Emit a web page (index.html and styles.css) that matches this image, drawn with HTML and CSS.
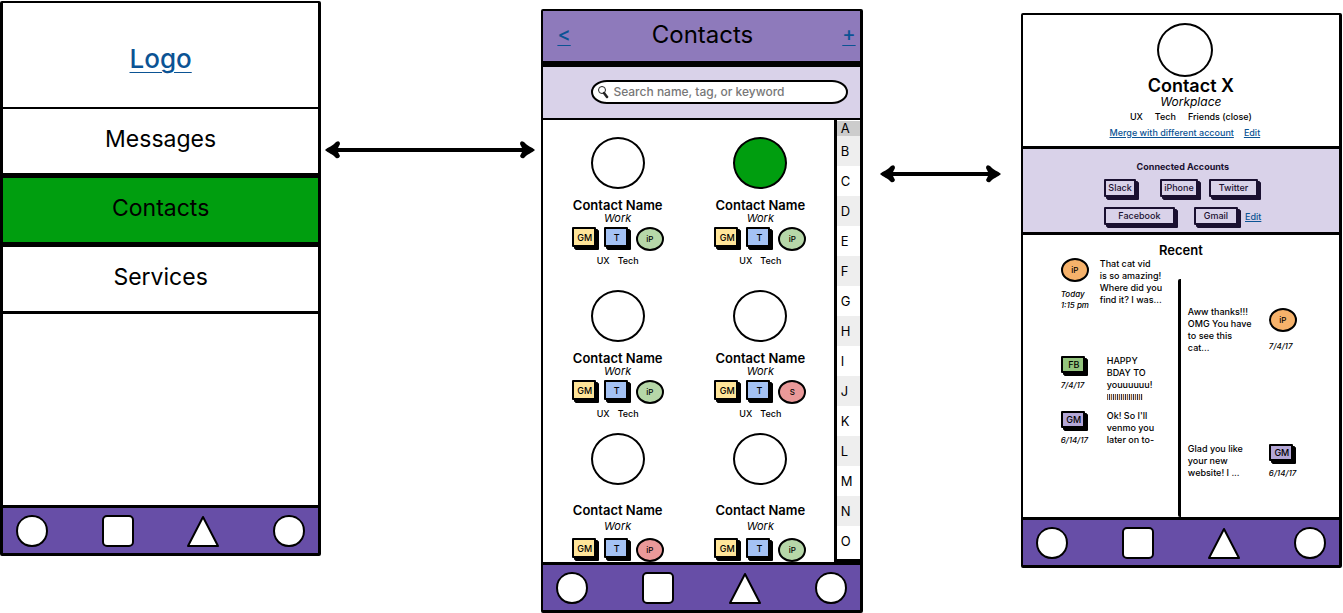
FILE: index.html
```
<!DOCTYPE html>
<html lang="en">
<head>
<meta charset="utf-8">
<title>Contacts wireflow</title>
<link rel="stylesheet" href="styles.css">
</head>
<body>
<svg class="defs" aria-hidden="true">
  <symbol id="head" viewBox="0 0 16 18"><path d="M0 9 C3 6 8 5 11 1 Q15 -1 15 3 L13 7 H16 V11 H13 L15 15 Q14 18 11 17 C8 13 3 12 0 9Z"/></symbol>
  <symbol id="circle" viewBox="0 0 32 32"><path d="M9 2.500 Q16 -.5 23 2.500 Q31 7 31 16 Q31 25 23 29.500 Q16 32.500 9 29.500 Q1 25 1 16 Q1 7 9 2.500Z" fill="#fff" stroke="#000" stroke-width="2"/></symbol>
  <symbol id="square" viewBox="0 0 32 32"><rect x="1" y="1" width="30" height="30" rx="4" fill="#fff" stroke="#000" stroke-width="2"/></symbol>
  <symbol id="triangle" viewBox="0 0 32 32"><path d="M16 2 L31 31 H1Z" fill="#fff" stroke="#000" stroke-width="2" stroke-linejoin="round"/></symbol>
</svg>
<main class="board">
  <section class="phone phone-menu">
    <div class="logo"><a href="#">Logo</a></div>
    <nav class="menu">
      <a href="#">Messages</a>
      <a href="#" class="active">Contacts</a>
      <a href="#">Services</a>
    </nav>
    <div class="blank"></div>
    <div class="tabs">
      <button aria-label="Circle"><svg><use href="#circle"/></svg></button>
      <button aria-label="Square"><svg><use href="#square"/></svg></button>
      <button aria-label="Triangle"><svg><use href="#triangle"/></svg></button>
      <button aria-label="Circle"><svg><use href="#circle"/></svg></button>
    </div>
  </section>

  <div class="arrow arrow-one"><svg><use href="#head"/></svg><span></span><svg class="flip"><use href="#head"/></svg></div>

  <section class="phone phone-list">
    <header class="bar">
      <a href="#">&lt;</a>
      <h1>Contacts</h1>
      <a href="#">+</a>
    </header>
    <div class="search">
      <label>
        <svg viewBox="0 0 12 14" aria-hidden="true"><circle cx="5" cy="5" r="3.500" fill="#fff" stroke="#222"/><path d="M7 8 L10 12" stroke="#222" stroke-width="2.500" stroke-linecap="round"/></svg>
        <input type="text" aria-label="Search" placeholder="Search name, tag, or keyword">
      </label>
    </div>
    <div class="list">
      <div class="people">
        <article class="person">
          <div class="avatar"></div><h2>Contact Name</h2><p class="work">Work</p>
          <div class="badges"><button class="box yellow">GM</button><button class="box blue">T</button><button class="oval green">iP</button></div>
          <p class="tags"><span>UX</span><span>Tech</span></p>
        </article>
        <article class="person">
          <div class="avatar online"></div><h2>Contact Name</h2><p class="work">Work</p>
          <div class="badges"><button class="box yellow">GM</button><button class="box blue">T</button><button class="oval green">iP</button></div>
          <p class="tags"><span>UX</span><span>Tech</span></p>
        </article>
        <article class="person">
          <div class="avatar"></div><h2>Contact Name</h2><p class="work">Work</p>
          <div class="badges"><button class="box yellow">GM</button><button class="box blue">T</button><button class="oval green">iP</button></div>
          <p class="tags"><span>UX</span><span>Tech</span></p>
        </article>
        <article class="person">
          <div class="avatar"></div><h2>Contact Name</h2><p class="work">Work</p>
          <div class="badges"><button class="box yellow">GM</button><button class="box blue">T</button><button class="oval red">S</button></div>
          <p class="tags"><span>UX</span><span>Tech</span></p>
        </article>
        <article class="person loose">
          <div class="avatar"></div><h2>Contact Name</h2><p class="work">Work</p>
          <div class="badges"><button class="box yellow">GM</button><button class="box blue">T</button><button class="oval red">iP</button></div>
        </article>
        <article class="person loose">
          <div class="avatar"></div><h2>Contact Name</h2><p class="work">Work</p>
          <div class="badges"><button class="box yellow">GM</button><button class="box blue">T</button><button class="oval green">iP</button></div>
        </article>
      </div>
      <ul class="index">
        <li>A</li><li>B</li><li>C</li><li>D</li><li>E</li><li>F</li><li>G</li><li>H</li><li>I</li><li>J</li><li>K</li><li>L</li><li>M</li><li>N</li><li>O</li>
      </ul>
    </div>
    <div class="tabs">
      <button aria-label="Circle"><svg><use href="#circle"/></svg></button>
      <button aria-label="Square"><svg><use href="#square"/></svg></button>
      <button aria-label="Triangle"><svg><use href="#triangle"/></svg></button>
      <button aria-label="Circle"><svg><use href="#circle"/></svg></button>
    </div>
  </section>

  <div class="arrow arrow-two"><svg><use href="#head"/></svg><span></span><svg class="flip"><use href="#head"/></svg></div>

  <section class="phone phone-detail">
    <header class="profile">
      <div class="avatar"></div>
      <div class="who">
        <h1>Contact X</h1>
        <p class="work">Workplace</p>
        <p class="tags"><span>UX</span><span>Tech</span><span>Friends (close)</span></p>
      </div>
      <p class="links"><a href="#">Merge with different account</a><a href="#">Edit</a></p>
    </header>
    <div class="accounts">
      <h2>Connected Accounts</h2>
      <div class="row"><button class="first">Slack</button><button>iPhone</button><button class="wide">Twitter</button></div>
      <div class="row second"><button class="first wider">Facebook</button><button class="wide">Gmail</button><a href="#">Edit</a></div>
    </div>
    <div class="recent">
      <h2>Recent</h2>
      <div class="threads">
        <div class="left">
          <article class="msg lead">
            <div class="meta"><button class="oval orange">iP</button><time>Today<br>1:15 pm</time></div>
            <p>That cat vid<br>is so amazing!<br>Where did you<br>find it? I was...</p>
          </article>
          <article class="msg">
            <div class="meta"><button class="box lime">FB</button><time>7/4/17</time></div>
            <p>HAPPY<br>BDAY TO<br>youuuuuu!<br><span class="emoji"></span></p>
          </article>
          <article class="msg">
            <div class="meta"><button class="box violet">GM</button><time>6/14/17</time></div>
            <p>Ok! So I'll<br>venmo you<br>later on to-</p>
          </article>
        </div>
        <div class="right">
          <article class="msg">
            <p>Aww thanks!!!<br>OMG You have<br>to see this<br>cat...</p>
            <div class="meta"><button class="oval orange">iP</button><time>7/4/17</time></div>
          </article>
          <article class="msg">
            <p>Glad you like<br>your new<br>website! I ...</p>
            <div class="meta"><button class="box violet">GM</button><time>6/14/17</time></div>
          </article>
        </div>
      </div>
    </div>
    <div class="tabs">
      <button aria-label="Circle"><svg><use href="#circle"/></svg></button>
      <button aria-label="Square"><svg><use href="#square"/></svg></button>
      <button aria-label="Triangle"><svg><use href="#triangle"/></svg></button>
      <button aria-label="Circle"><svg><use href="#circle"/></svg></button>
    </div>
  </section>
</main>
</body>
</html>
```
FILE: styles.css
```
* { box-sizing: border-box; }
body { margin: 0; background: #fff; color: #000; font-family: Inter, "Open Sans", sans-serif; font-size: 9px; font-weight: 500; }
h1, h2, p, ul { margin: 0; padding: 0; }
h1, h2 { white-space: nowrap; }
button { font-family: inherit; font-weight: inherit; color: inherit; padding: 0; cursor: pointer; }
a { color: #0b5394; }
.defs { display: none; }

.board {
  display: grid;
  grid-template-columns: 321fr 220fr 321fr 158fr 321fr;
  align-items: start;
  padding: 1px 1px 0 0;
}
.phone { min-width: 0; border: 2px solid #000; border-right-width: 3px; border-bottom-width: 3px; border-radius: 2px; background: #fff; }
.phone-menu { border-left-width: 3px; }
.phone-list { margin-top: 8px; }
.phone-detail { margin-top: 12px; }

/* first phone */
.logo { display: flex; justify-content: center; align-items: center; height: 104px; padding-top: 6px; font-size: 26px; }
.logo a, .bar a { text-decoration-thickness: 1px; text-underline-offset: 4px; }
.menu a {
  display: flex; justify-content: center; align-items: center; height: 69px;
  border-top: 2px solid #000; border-bottom: 3px solid #000;
  font-size: 23px; font-weight: 400; color: #000; text-decoration: none; padding-bottom: 4px;
}
.menu .active { background: #009e0f; }
.blank { height: 191px; }

/* bottom tab bar */
.tabs { display: flex; justify-content: space-between; padding: 7px 13px; background: #674ea7; border-top: 3px solid #000; }
.tabs button { border: 0; background: none; width: 32px; height: 31px; }
.tabs svg { display: block; width: 32px; height: 32px; }

/* arrows between phones */
.arrow { display: flex; align-items: center; }
.arrow svg { width: 16px; height: 18px; flex: none; }
.arrow span { flex: 1; height: 4px; background: #000; }
.arrow .flip { transform: scaleX(-1); }
.arrow-one { margin-top: 140px; padding: 0 6px 0 4px; }
.arrow-two { margin-top: 164px; padding: 0 20px 0 17px; }

/* contacts list */
.bar { display: flex; justify-content: space-between; align-items: center; height: 53px; padding: 0 4px 4px 14px; background: #8e7abb; border-bottom: 3px solid #000; font-size: 20px; }
.bar h1 { flex: 1; padding-right: 8px; text-align: center; font-size: 24px; font-weight: 400; }
.search { height: 56px; padding: 13px 12px 13px 48px; background: #d9d2e9; border-top: 3px solid #000; border-bottom: 2px solid #000; }
.search label { display: flex; align-items: center; height: 24px; padding-left: 4px; border: 2px solid #000; border-radius: 16px / 12px; background: #fff; }
.search svg { width: 12px; height: 14px; margin-right: 4px; flex: none; }
.search input { flex: 1; min-width: 0; border: 0; padding: 0 0 1px; background: none; font: 500 12px Inter, sans-serif; outline: none; }
.search input::placeholder { color: #777; opacity: 1; }
.list { display: flex; }
.people { flex: 1; min-width: 0; display: grid; grid-template-columns: 1fr 1fr; grid-template-rows: 153px 143px auto; padding: 17px 2px 0 3px; }
.person { text-align: center; }
.avatar { width: 54px; height: 52px; margin: 0 auto; border: 2px solid #000; border-radius: 50%; background: #fff; }
.online { background: #009e0f; }
.person h2 { margin-top: 10px; font-size: 13px; line-height: 12px; font-weight: 600; }
.work { font-size: 12px; line-height: 12px; font-style: italic; font-weight: 400; }
.person .work { margin-top: 1px; font-size: 11px; }
.person .badges { margin-top: 3px; }
.badges { display: flex; justify-content: center; gap: 4px; }
.tags { display: flex; justify-content: center; gap: 8px; font-size: 9px; line-height: 12px; }
.person .tags { margin-top: 4px; }
.person.loose h2 { margin-top: 19px; }
.person.loose .work { margin-top: 4px; }
.person.loose .badges { margin-top: 6px; }
.box, .oval { display: block; border: 2px solid #000; font-size: 9px; line-height: 12px; }
.box { width: 24px; height: 20px; margin-right: 4px; padding: 1px 0 0 2px; border-radius: 1px; box-shadow: 2px 2px 0 #000, 3px 3px 0 #000; }
.oval { width: 28px; height: 24px; border-radius: 50%; font-size: 8px; }
.yellow { background: #ffe599; }
.blue { background: #a4c2f4; }
.green { background: #b6d7a8; }
.red { background: #ea9999; }
.orange { background: #f6b26b; }
.lime { background: #93c47d; }
.violet { background: #b4a7d6; }
.index { flex: none; width: 26px; list-style: none; padding: 1px 0 2px; border-left: 3px solid #000; border-bottom: 3px solid #000; font-size: 13px; font-weight: 400; }
.index li { height: 30px; padding-left: 4px; line-height: 30px; }
.index li:nth-child(even) { background: #eee; }
.index li:first-child { height: 15px; line-height: 15px; background: #ccc; }

/* contact detail */
.profile { height: 134px; padding: 8px 0 0 8px; border-bottom: 3px solid #000; }
.profile .avatar { width: 56px; height: 54px; }
.who { padding-left: 12px; text-align: center; }
.who h1 { font-size: 18px; line-height: 17px; font-weight: 600; }
.who .work { line-height: 16px; }
.who .tags { line-height: 14px; gap: 12px; }
.links { display: flex; justify-content: center; gap: 10px; padding-top: 2px; line-height: 14px; white-space: nowrap; }
.accounts { height: 86px; padding: 11px 0 0 4px; background: #d9d2e9; border-bottom: 3px solid #000; }
.accounts h2 { text-align: center; font-size: 9px; line-height: 14px; font-weight: 700; color: #1a1030; }
.row { display: flex; align-items: center; gap: 8px; width: 157px; margin: 5px auto 0; }
.second { margin-top: 10px; gap: 4px; }
.row button { height: 18px; border: 2px solid #1a1030; border-radius: 1px; margin-right: 3px; padding: 0 2px; background: #d9d2e9; box-shadow: 2px 2px 0 #1a1030, 3px 3px 0 #1a1030; font-size: 9px; line-height: 12px; color: #1a1030; }
.row .wide { padding: 0 8px; }
.row .wider { padding: 0 12px; }
.row .first { margin-right: auto; }
.recent { padding-top: 8px; }
.recent h2 { text-align: center; font-size: 13px; line-height: 15px; font-weight: 600; }
.threads { display: grid; grid-template-columns: 155fr 161fr; height: 259px; }
.left { padding-left: 38px; }
.msg { display: flex; gap: 18px; line-height: 12px; white-space: nowrap; }
.msg.lead { gap: 11px; height: 97px; }
.left .msg:nth-child(2) { height: 55px; }
.meta { width: 28px; flex: none; }
.meta time { display: block; font-size: 8px; line-height: 11px; font-style: italic; }
.lead time { padding-top: 7px; }
.meta .box { width: 24px; height: 17px; margin: 1px 0 7px; }
.emoji { display: inline-block; width: 36px; height: 6px; background: repeating-linear-gradient(90deg, #8a5a30 0 1px, #d8e4ee 1px 2px, #335 2px 3px, #f0dcc0 3px 4px); }
.right { margin-top: 21px; padding: 27px 0 0 7px; border-left: 3px solid #000; border-radius: 2px; }
.right .msg { gap: 0; }
.right .msg:first-child { height: 137px; }
.right p { width: 81px; flex: none; }
.right .oval { margin-bottom: 9px; margin-top: 2px; }
```
